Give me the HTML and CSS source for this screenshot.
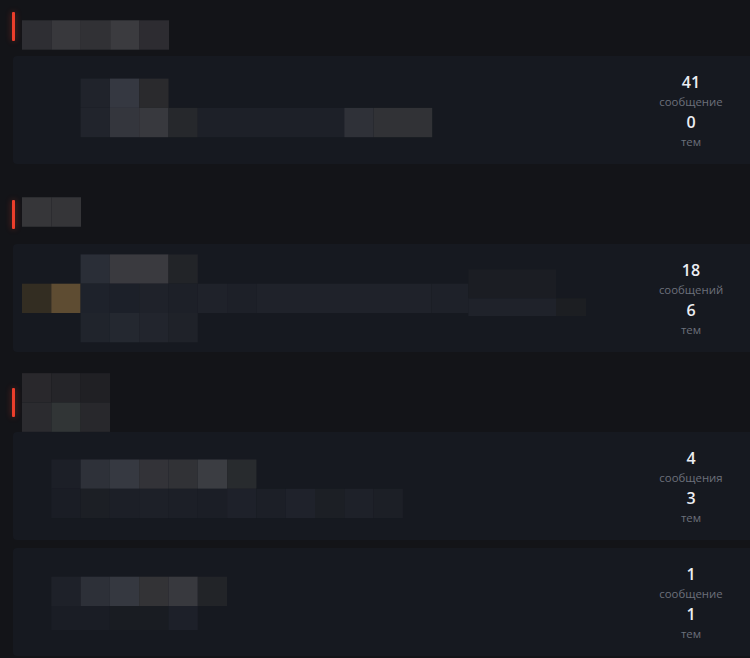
FILE: index.html
```html
<!DOCTYPE html>
<html lang="ru">
<head>
<meta charset="utf-8">
<title>Форум</title>
<link rel="stylesheet" href="styles.css">
</head>
<body>
<main class="forum">

  <section class="category">
    <header class="cat-head">
      <span class="cat-bar"></span>
      <svg class="cat-title t1" width="147" height="30" viewBox="0 0 146.5 29.3" aria-label="категория">
        <rect x="0" y="0" width="29.3" height="29.3" fill="#2e2e33"/>
        <rect x="29.3" y="0" width="29.3" height="29.3" fill="#38383c"/>
        <rect x="58.6" y="0" width="29.3" height="29.3" fill="#313135"/>
        <rect x="87.9" y="0" width="29.3" height="29.3" fill="#3b3b3f"/>
        <rect x="117.2" y="0" width="29.3" height="29.3" fill="#2d2c31"/>
      </svg>
    </header>
    <div class="forums">
      <article class="card">
        <svg class="card-info" width="480" height="108" viewBox="0 0 480 108">
          <rect x="67.6" y="22.6" width="29.3" height="29.3" fill="#20232b"/>
          <rect x="96.9" y="22.6" width="29.3" height="29.3" fill="#353841"/>
          <rect x="126.2" y="22.6" width="29.3" height="29.3" fill="#2a2a2d"/>
          <rect x="67.6" y="51.9" width="29.3" height="29.3" fill="#21242c"/>
          <rect x="96.9" y="51.9" width="29.3" height="29.3" fill="#34363d"/>
          <rect x="126.2" y="51.9" width="29.3" height="29.3" fill="#38393e"/>
          <rect x="155.5" y="51.9" width="29.3" height="29.3" fill="#26282c"/>
          <rect x="184.8" y="51.9" width="146.5" height="29.3" fill="#1d2028"/>
          <rect x="331.3" y="51.9" width="29.3" height="29.3" fill="#2f3138"/>
          <rect x="360.6" y="51.9" width="58.6" height="29.3" fill="#313236"/>
        </svg>
        <div class="stats">
          <span class="num">41</span>
          <span class="lbl">сообщение</span>
          <span class="num">0</span>
          <span class="lbl">тем</span>
        </div>
      </article>
    </div>
  </section>

  <section class="category">
    <header class="cat-head">
      <span class="cat-bar"></span>
      <svg class="cat-title t2" width="59" height="30" viewBox="0 0 58.6 29.3" aria-label="категория">
        <rect x="0" y="0" width="29.3" height="29.3" fill="#363639"/>
        <rect x="29.3" y="0" width="29.3" height="29.3" fill="#353538"/>
      </svg>
    </header>
    <div class="forums">
      <article class="card">
        <svg class="card-info" width="480" height="108" viewBox="0 0 480 108">
          <rect x="67.6" y="10.4" width="29.3" height="29.3" fill="#2a2e37"/>
          <rect x="96.9" y="10.4" width="58.6" height="29.3" fill="#3a3a3f"/>
          <rect x="155.5" y="10.4" width="29.3" height="29.3" fill="#222428"/>
          <rect x="9" y="39.7" width="29.3" height="29.3" fill="#332d22"/>
          <rect x="38.3" y="39.7" width="29.3" height="29.3" fill="#5e4c32"/>
          <rect x="67.6" y="39.7" width="29.3" height="29.3" fill="#1e222b"/>
          <rect x="96.9" y="39.7" width="29.3" height="29.3" fill="#1c2029"/>
          <rect x="126.2" y="39.7" width="29.3" height="29.3" fill="#1f222a"/>
          <rect x="155.5" y="39.7" width="29.3" height="29.3" fill="#1d2028"/>
          <rect x="184.8" y="39.7" width="29.3" height="29.3" fill="#1f222a"/>
          <rect x="214.1" y="39.7" width="29.3" height="29.3" fill="#1d2028"/>
          <rect x="243.4" y="39.7" width="175" height="29.3" fill="#1f222a"/>
          <rect x="418.4" y="39.7" width="37" height="29.3" fill="#1e2129"/>
          <rect x="455.3" y="25.3" width="87.7" height="29" fill="#1b1d23"/>
          <rect x="455.3" y="54.3" width="87.7" height="17.7" fill="#1f222a"/>
          <rect x="543" y="54.3" width="30" height="17.7" fill="#1c1e22"/>
          <rect x="67.6" y="69" width="29.3" height="29.3" fill="#20242c"/>
          <rect x="96.9" y="69" width="29.3" height="29.3" fill="#242830"/>
          <rect x="126.2" y="69" width="29.3" height="29.3" fill="#22252d"/>
          <rect x="155.5" y="69" width="29.3" height="29.3" fill="#1f2229"/>
        </svg>
        <div class="stats">
          <span class="num">18</span>
          <span class="lbl">сообщений</span>
          <span class="num">6</span>
          <span class="lbl">тем</span>
        </div>
      </article>
    </div>
  </section>

  <section class="category">
    <header class="cat-head">
      <span class="cat-bar"></span>
      <svg class="cat-title t3" width="88" height="59" viewBox="0 0 87.9 58.6" aria-label="категория">
        <rect x="0" y="0" width="29.3" height="29.3" fill="#29282c"/>
        <rect x="29.3" y="0" width="29.3" height="29.3" fill="#252529"/>
        <rect x="58.6" y="0" width="29.3" height="29.3" fill="#202024"/>
        <rect x="0" y="29.3" width="29.3" height="29.3" fill="#2b2b2f"/>
        <rect x="29.3" y="29.3" width="29.3" height="29.3" fill="#313536"/>
        <rect x="58.6" y="29.3" width="29.3" height="29.3" fill="#28282c"/>
      </svg>
    </header>
    <div class="forums">
      <article class="card">
        <svg class="card-info" width="480" height="108" viewBox="0 0 480 108">
          <rect x="38.3" y="27.5" width="29.3" height="29.3" fill="#1c1f27"/>
          <rect x="67.6" y="27.5" width="29.3" height="29.3" fill="#2e3139"/>
          <rect x="96.9" y="27.5" width="29.3" height="29.3" fill="#363941"/>
          <rect x="126.2" y="27.5" width="29.3" height="29.3" fill="#333338"/>
          <rect x="155.5" y="27.5" width="29.3" height="29.3" fill="#313236"/>
          <rect x="184.8" y="27.5" width="29.3" height="29.3" fill="#3b3d42"/>
          <rect x="214.1" y="27.5" width="29.3" height="29.3" fill="#282b2e"/>
          <rect x="38.3" y="56.8" width="29.3" height="29.3" fill="#1a1d25"/>
          <rect x="67.6" y="56.8" width="29.3" height="29.3" fill="#1c1f25"/>
          <rect x="96.9" y="56.8" width="29.3" height="29.3" fill="#1c1f27"/>
          <rect x="126.2" y="56.8" width="29.3" height="29.3" fill="#1d2028"/>
          <rect x="155.5" y="56.8" width="29.3" height="29.3" fill="#1c1f27"/>
          <rect x="184.8" y="56.8" width="29.3" height="29.3" fill="#1b1e26"/>
          <rect x="214.1" y="56.8" width="29.3" height="29.3" fill="#1e212a"/>
          <rect x="243.4" y="56.8" width="29.3" height="29.3" fill="#1c1f27"/>
          <rect x="272.7" y="56.8" width="29.3" height="29.3" fill="#1f222b"/>
          <rect x="302" y="56.8" width="29.3" height="29.3" fill="#1c1f25"/>
          <rect x="331.3" y="56.8" width="29.3" height="29.3" fill="#1e2129"/>
          <rect x="360.6" y="56.8" width="29.3" height="29.3" fill="#1c1f26"/>
        </svg>
        <div class="stats">
          <span class="num">4</span>
          <span class="lbl">сообщения</span>
          <span class="num">3</span>
          <span class="lbl">тем</span>
        </div>
      </article>
      <article class="card">
        <svg class="card-info" width="480" height="108" viewBox="0 0 480 108">
          <rect x="38.3" y="28.7" width="29.3" height="29.3" fill="#1e2129"/>
          <rect x="67.6" y="28.7" width="29.3" height="29.3" fill="#2d3038"/>
          <rect x="96.9" y="28.7" width="29.3" height="29.3" fill="#353840"/>
          <rect x="126.2" y="28.7" width="29.3" height="29.3" fill="#333336"/>
          <rect x="155.5" y="28.7" width="29.3" height="29.3" fill="#38393e"/>
          <rect x="184.8" y="28.7" width="29.3" height="29.3" fill="#222428"/>
          <rect x="38.3" y="58" width="58.6" height="24" fill="#1a1d25"/>
          <rect x="96.9" y="58" width="58.6" height="24" fill="#191c22"/>
          <rect x="155.5" y="58" width="29.3" height="24" fill="#1d2029"/>
        </svg>
        <div class="stats">
          <span class="num">1</span>
          <span class="lbl">сообщение</span>
          <span class="num">1</span>
          <span class="lbl">тем</span>
        </div>
      </article>
    </div>
  </section>

</main>
</body>
</html>
```

FILE: styles.css
```css
* {
  box-sizing: border-box;
}

html, body {
  margin: 0;
  padding: 0;
  background: #131418;
  overflow: hidden;
}

body {
  font-family: "Open Sans", "Noto Sans", "Liberation Sans", sans-serif;
  color: #e6e8ee;
}

.forum {
  display: flex;
  flex-direction: column;
  gap: 36px;
  padding: 12px 0 0 13px;
  width: 750px;
}

.category {
  display: flex;
  flex-direction: column;
  gap: 15px;
}

.cat-head {
  display: flex;
  align-items: flex-start;
  gap: 7px;
  height: 29px;
  margin-left: -1px;
}

.cat-bar {
  flex: none;
  width: 3px;
  height: 29px;
  background: #ec3e2b;
  border-radius: 1px;
  box-shadow: 0 0 6px rgba(236, 62, 43, 0.45);
}

.cat-title {
  flex: none;
  display: block;
}

.t1 { margin-top: 8px; }
.t2 { margin-top: -3px; }
.t3 { margin-top: -15px; }

.forums {
  display: flex;
  flex-direction: column;
  gap: 8px;
}

.card {
  display: flex;
  justify-content: space-between;
  align-items: center;
  height: 108px;
  background: #161920;
  border-radius: 4px 0 0 4px;
}

.card-info {
  flex: none;
  display: block;
  overflow: visible;
}

.stats {
  flex: none;
  width: 118px;
  margin-top: 2px;
  display: flex;
  flex-direction: column;
  align-items: center;
}

.num {
  font-size: 16px;
  line-height: 22px;
  font-weight: 600;
  color: #eceef3;
}

.lbl {
  font-size: 11.4px;
  line-height: 18px;
  color: #6c707b;
}
```
